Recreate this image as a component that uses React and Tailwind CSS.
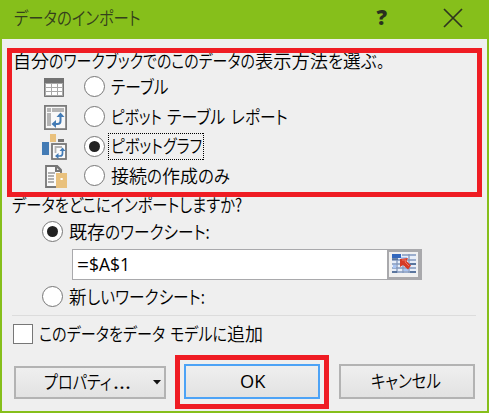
import { useLayoutEffect, useRef, useState } from "react";

// A run of text whose advance is condensed horizontally to a given width.
function Run({ text, width, className = "" }) {
  const ref = useRef(null);
  const [scale, setScale] = useState(1);
  useLayoutEffect(() => {
    setScale(width / ref.current.offsetWidth);
  }, [text, width]);
  return (
    <span className="inline-block shrink-0" style={{ width }}>
      <span
        ref={ref}
        className={`inline-block origin-left whitespace-pre ${className}`}
        style={{ transform: `scaleX(${scale})` }}
      >
        {text}
      </span>
    </span>
  );
}

function Line({ runs, className = "" }) {
  return (
    <span className={`flex items-center leading-none ${className}`}>
      {runs.map(([text, width], i) => (
        <Run key={i} text={text} width={width} />
      ))}
    </span>
  );
}

function Radio({ checked }) {
  return (
    <span className="flex size-[21px] shrink-0 items-center justify-center rounded-full border border-[#777] bg-white">
      {checked && <span className="size-[11px] rounded-full bg-[#222]" />}
    </span>
  );
}

function TableIcon() {
  return (
    <svg width="32" height="26" viewBox="0 0 32 26" className="shrink-0">
      <rect x="4" y="4" width="20" height="19" fill="#a9a9a9" />
      <rect x="4" y="4" width="20" height="5" fill="#727272" />
      <path d="M6 10h5v3H6zM12 10h5v3h-5zM18 10h4v3h-4zM6 14h5v3H6zM12 14h5v3h-5zM18 14h4v3h-4zM6 18h5v3H6zM12 18h5v3h-5zM18 18h4v3h-4z" fill="#fff" />
      <path d="M4.500 9v13.500h19V9" fill="none" stroke="#777" />
    </svg>
  );
}

function PivotIcon() {
  return (
    <svg width="32" height="26" viewBox="0 0 32 26" className="shrink-0">
      <rect x="4.900" y="1.900" width="21.200" height="23.200" fill="#f8f8f8" stroke="#7b7b7b" strokeWidth="1.800" />
      <path d="M7 4h4v4H7zM12 4h12v4H12zM7 9h4v13H7z" fill="#b4b4b4" />
      <path d="M20.500 12v5c0 2-1 3-3 3H15" fill="none" stroke="#437bb5" strokeWidth="2" />
      <path d="M20.500 8.500l4 4.500h-8zM11.500 20l4.500-4v8z" fill="#437bb5" />
    </svg>
  );
}

function ChartIcon() {
  return (
    <svg width="32" height="28" viewBox="0 0 32 28" className="shrink-0">
      <rect x="2" y="10" width="7" height="13" fill="#437bb5" />
      <rect x="10" y="2" width="6" height="8" fill="#e9c17d" />
      <rect x="18" y="7" width="6" height="3" fill="#747474" />
      <rect x="12" y="12" width="14" height="15" fill="#fafafa" stroke="#777" strokeWidth="1.800" />
      <path d="M15.500 21v-6h6.500" fill="none" stroke="#b4b4b4" strokeWidth="1.800" />
      <path d="M22.500 18v3.500c0 1.500-.8 2.500-2.500 2.500h-3" fill="none" stroke="#437bb5" strokeWidth="1.700" />
      <path d="M22.500 15.500l3 3.500h-6zM15 24l3.500-3v6z" fill="#437bb5" />
    </svg>
  );
}

function ConnectionIcon() {
  return (
    <svg width="32" height="26" viewBox="0 0 32 26" className="shrink-0">
      <path d="M6 3h10.500l4.500 4.500V24H6z" fill="#fafafa" stroke="#777" strokeWidth="1.800" />
      <path d="M15 2h2.500l4.500 4.500V9h-7z" fill="#777" />
      <path d="M17 5l2 2h-2z" fill="#eee" />
      <path d="M8 10h7M8 13h6M8 16h6M8 19h6" stroke="#999" strokeWidth="1.500" />
      <rect x="16" y="10" width="11" height="15" fill="#e9c17d" />
      <rect x="20.500" y="15" width="2.200" height="2" fill="#fff" />
    </svg>
  );
}

function RangeIcon() {
  return (
    <svg width="24" height="20" viewBox="0 0 24 20">
      <rect width="24" height="19" fill="#e7eef9" />
      <path d="M10 1h14M0 6h24M0 10h24M0 14h24M0 18h24M5 6v13M11 3v16M17 0v19" stroke="#8298bd" strokeWidth="1.300" />
      <path d="M0 0h9v4H0z" fill="#3267bd" />
      <path d="M9 3h6v3H9zM1 11h3v3H1zM12 15h4v2h-4z" fill="#a9c5f4" />
      <path d="M0 5h6M0 18h5M18 18h6M18 10h6" stroke="#47648e" strokeWidth="1.600" />
      <path d="M8 5l8-1-1.500 3 4.500 4.500-3 4-5-4.500-3 2z" fill="#d63a26" />
      <path d="M10 6h4l-1 2 4 4" fill="none" stroke="#ef7460" />
    </svg>
  );
}

const options = [
  { icon: <TableIcon />, runs: [["テーブル", 57]] },
  { icon: <PivotIcon />, runs: [["ピボット", 51], [" ", 5], ["テーブル", 58], [" ", 6], ["レポート", 57]] },
  { icon: <ChartIcon />, runs: [["ピボットグラフ", 91]], checked: true },
  { icon: <ConnectionIcon />, runs: [["接続", 36], ["の", 15], ["作成", 36], ["のみ", 32]] },
];

export default function App() {
  return (
    <div className="relative flex h-[413px] w-[489px] flex-col overflow-hidden bg-[#86bf1b] px-[2px] pb-[2px] font-['Noto_Sans_CJK_JP',sans-serif] text-[18.500px] font-[350] text-black [font-feature-settings:'palt']">
      <header className="flex h-[39px] shrink-0 items-center pl-3 text-[#34401c]">
        <Line runs={[["データのインポート", 127]]} className="-mt-[4px] flex-1" />
        <span className="mr-[56px] -mt-[5px] font-['Open_Sans',sans-serif] text-[21px] leading-none font-extrabold text-[#29301f]">?</span>
        <svg width="20" height="20" viewBox="0 0 20 20" className="mr-[24px] -mt-[4px]">
          <path d="M1 1l18 18M19 1L1 19" stroke="#2e351f" strokeWidth="1.700" />
        </svg>
      </header>
      <main className="flex flex-1 flex-col bg-[#efefef]">
        <Line
          className="mt-[9px] h-6 pl-[11px]"
          runs={[["自分", 36], ["のワークブックでのこのデータの", 206], ["表示方法", 73], ["を", 15], ["選", 18], ["ぶ", 16], ["。", 7]]}
        />
        <div className="flex flex-col pl-[38px]">
          {options.map((o, i) => (
            <label key={i} className="flex h-[29.700px] items-center">
              {o.icon}
              <span className="ml-[12px] flex">
                <Radio checked={o.checked} />
              </span>
              {o.checked ? (
                <span className="relative ml-[3px] flex h-[27px] w-[96px] items-center pb-px pl-[3px]">
                  <Line runs={o.runs} />
                  <svg width="96" height="27" className="absolute inset-0">
                    <path d="M0 .5h96M0 26.500h96M.5 0v27M95.500 0v27" stroke="#000" strokeDasharray="1 1" />
                  </svg>
                </span>
              ) : (
                <Line className="mb-px ml-[6px]" runs={o.runs} />
              )}
            </label>
          ))}
        </div>
        <Line className="mt-px h-6 pl-[10px]" runs={[["データをどこにインポートしますか?", 230]]} />
        <label className="mt-[2px] flex h-7 items-center pl-[40px]">
          <Radio checked />
          <Line className="mb-[2px] ml-[6px]" runs={[["既存", 36], ["のワークシート:", 105]]} />
        </label>
        <div className="mt-[3px] ml-[70px] flex h-[31px] w-[350px] shrink-0 border border-[#a9a9ac] bg-white">
          <span className="flex flex-1 items-center pl-[4px] text-[17.500px] leading-none font-normal font-['Open_Sans',sans-serif]">
            <Run text="=" width={12} />
            <Run text="$A$1" width={41} />
          </span>
          <span className="flex w-[34px] items-center justify-center border-2 border-r-[3px] border-[#a9a9ac] bg-[#f0f0f0]">
            <RangeIcon />
          </span>
        </div>
        <label className="mt-[3px] flex h-7 items-center pl-[40px]">
          <Radio />
          <Line className="mb-px ml-[6px]" runs={[["新", 18], ["しいワークシート:", 118]]} />
        </label>
        <div className="mt-[4px] ml-[10px] h-px w-[464px] bg-[#dcdcdc]" />
        <label className="mt-[8px] flex h-5 items-center pl-[11px]">
          <span className="size-5 border border-[#777] bg-white" />
          <Line className="mb-px ml-[6px]" runs={[["このデータをデータ", 126], [" ", 5], ["モデルに", 57], ["追加", 36]]} />
        </label>
        <div className="mt-[20px] flex h-[35px] items-end pl-[12px]">
          <button className="flex h-[33px] w-[152px] items-center border-2 border-[#b3b3b3] bg-linear-to-b from-[#efefef] to-[#e2e2e2] pb-[2px] pl-[28px]">
            <Line runs={[["プロパティ", 67], ["...", 18]]} />
            <svg width="8" height="5" className="mt-[2px] ml-[24px]">
              <path d="M0 0h8L4 4.500z" fill="#111" />
            </svg>
          </button>
          <button className="ml-[18px] flex h-[35px] w-[136px] items-center justify-center border-2 border-[#4da3f6] bg-linear-to-b from-[#efefef] to-[#e2e2e2] text-[17.500px] leading-none font-normal font-['Open_Sans',sans-serif]">
            <Run text="OK" width={25} />
          </button>
          <button className="ml-[19px] flex h-[35px] w-[136px] items-center justify-center border-2 border-[#b3b3b3] bg-linear-to-b from-[#efefef] to-[#e2e2e2] pr-[3px] pb-[2px]">
            <Line runs={[["キャンセル", 70]]} />
          </button>
        </div>
      </main>
      <div className="pointer-events-none absolute top-[48px] left-[7px] h-[149px] w-[475px] border-[5px] border-[#ef1c23]" />
      <div className="pointer-events-none absolute top-[355px] left-[175px] h-[54px] w-[154px] border-[5px] border-[#ef1c23]" />
    </div>
  );
}
